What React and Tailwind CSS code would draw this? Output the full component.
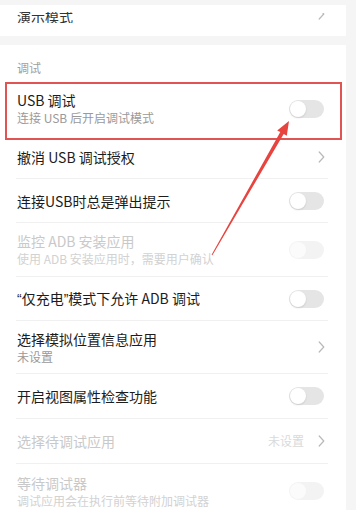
import React from 'react';

const Toggle = ({ disabled }) => (
  <div
    className={
      'w-[35px] h-[18px] rounded-full p-[1px] flex items-center ' +
      (disabled ? 'bg-[#f3f3f3]' : 'bg-[#e5e5e5]')
    }
  >
    <div
      className={
        'w-[16px] h-[16px] rounded-full ' +
        (disabled ? 'bg-[#fbfbfb]' : 'bg-white shadow-[0_1px_2px_rgba(0,0,0,0.12)]')
      }
    />
  </div>
);

const Chevron = () => (
  <svg width="7" height="12" viewBox="0 0 7 12" fill="none">
    <path d="M1.2 1l4.6 5-4.6 5" stroke="#b9b9b9" strokeWidth="1.2" strokeLinecap="round" strokeLinejoin="round" />
  </svg>
);

// 引号用拉丁字体，避免全角宽度
const Q = ({ children }) => <span className="font-['Liberation_Sans',sans-serif]">{children}</span>;

const rows = [
  { title: '撤消 USB 调试授权', h: 'h-[44px]', right: 'chevron' },
  { title: '连接USB时总是弹出提示', h: 'h-[44px]', right: 'toggle' },
  { title: '监控 ADB 安装应用', sub: '使用 ADB 安装应用时，需要用户确认', h: 'h-[54px]', right: 'toggle', disabled: true },
  {
    title: (
      <>
        <Q>“</Q>仅充电<Q>”</Q>模式下允许 ADB 调试
      </>
    ),
    h: 'h-[44px]',
    right: 'toggle',
  },
  { title: '选择模拟位置信息应用', sub: '未设置', h: 'h-[53px]', right: 'chevron' },
  { title: '开启视图属性检查功能', h: 'h-[45px]', right: 'toggle' },
  { title: '选择待调试应用', h: 'h-[45px]', right: 'value', value: '未设置', disabled: true },
  { title: '等待调试器', sub: '调试应用会在执行前等待附加调试器', h: 'h-[54px]', right: 'toggle', disabled: true },
];

const Row = ({ row, last }) => (
  <div
    className={
      'flex items-center justify-between ml-[16px] mr-[18px] ' +
      row.h +
      (last ? '' : ' border-b border-[#f0f0f0]')
    }
  >
    <div className="flex flex-col gap-[1px] pl-[1px]">
      <div className={'text-[14px] leading-[18px] ' + (row.disabled ? 'text-[#c9c9c9]' : 'text-[#1c1c1c]')}>
        {row.title}
      </div>
      {row.sub && (
        <div className={'text-[12px] leading-[16px] ' + (row.disabled ? 'text-[#d2d2d2]' : 'text-[#9a9a9a]')}>
          {row.sub}
        </div>
      )}
    </div>
    {row.right === 'toggle' && (
      <div className="pr-[4px]">
        <Toggle disabled={row.disabled} />
      </div>
    )}
    {row.right === 'chevron' && (
      <div className="pr-[3px] flex items-center">
        <Chevron />
      </div>
    )}
    {row.right === 'value' && (
      <div className="pr-[3px] flex items-center gap-[14px]">
        <span className="text-[12px] leading-[16px] text-[#dadada]">{row.value}</span>
        <Chevron />
      </div>
    )}
  </div>
);

const App = () => {
  return (
    <div className="relative w-[356px] h-[510px] overflow-hidden bg-[#f5f5f5] font-['Noto_Sans_CJK_SC',sans-serif]">
      <div className="w-[346px]">
        <div className="h-[5px]" />
        {/* 上一组最后一行，只露出下半截 */}
        <div className="h-[31px] bg-white flex justify-between">
          <div className="mt-[7px] ml-[17px] h-[11px] overflow-hidden">
            <div className="-mt-[3px] text-[14px] leading-[14px] text-[#333]">演示模式</div>
          </div>
          <div className="mt-[8px] mr-[21px] h-[7px] overflow-hidden">
            <div className="-mt-[5px]">
              <Chevron />
            </div>
          </div>
        </div>
        <div className="h-[9px]" />

        <div className="bg-white">
          <div className="h-[37px] pt-[16px] pl-[17px] text-[12px] leading-[14px] text-[#a0a0a0]">调试</div>

          <div className="h-[53px] flex items-center justify-between ml-[16px] mr-[18px]">
            <div className="flex flex-col gap-[1px] pl-[1px]">
              <div className="text-[14px] leading-[18px] text-[#1c1c1c]">USB 调试</div>
              <div className="text-[12px] leading-[16px] text-[#9a9a9a]">连接 USB 后开启调试模式</div>
            </div>
            <div className="pr-[4px]">
              <Toggle />
            </div>
          </div>

          {rows.map((row, i) => (
            <Row key={i} row={row} last={i === rows.length - 1} />
          ))}
        </div>
      </div>

      {/* 标注：红框和箭头 */}
      <div className="absolute left-[5px] top-[82px] w-[337px] h-[58px] border-2 border-[#e05454] pointer-events-none" />
      <svg className="absolute left-0 top-0 pointer-events-none" width="356" height="510" viewBox="0 0 356 510">
        <polygon
          points="289,121 286.8,135.8 283.7,134.1 212.4,255.2 211.6,254.8 280.3,132.1 277.2,130.4"
          fill="#e8443f"
        />
      </svg>
    </div>
  );
};

export default App;
